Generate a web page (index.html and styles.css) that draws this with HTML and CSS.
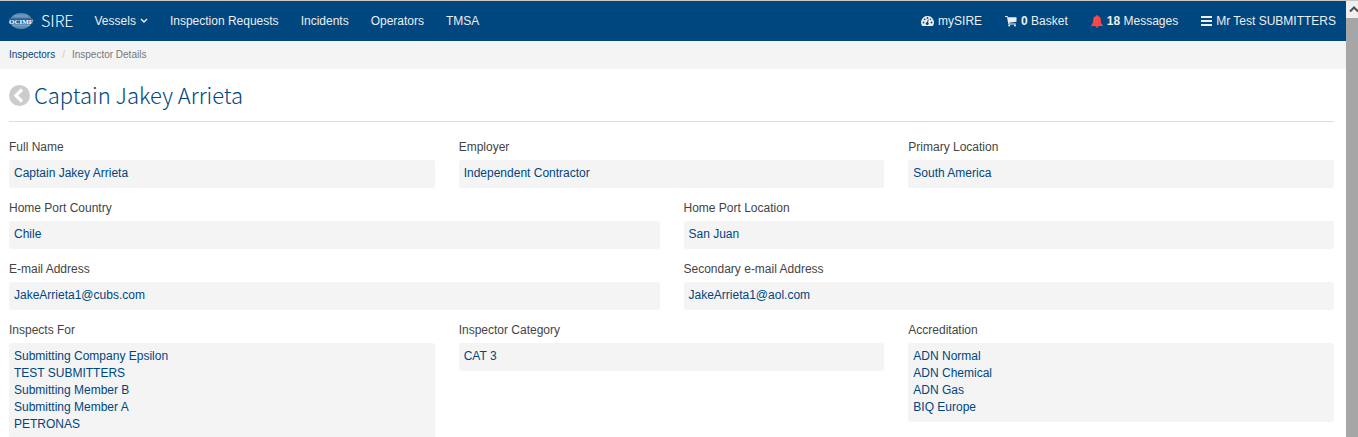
FILE: index.html
```html
<!DOCTYPE html>
<html lang="en">
<head>
    <meta charset="UTF-8" />
    <meta name="viewport" content="width=device-width, initial-scale=1.0" />
    <title>Inspector Details</title>
    <link rel="stylesheet" href="styles.css">
</head>
<body>
    <div class="page">
        <header class="navbar">
            <a class="brand" href="#">
                <svg class="brand-logo" width="26" height="18" viewBox="0 0 26 18" aria-hidden="true">
                    <ellipse cx="13" cy="9" rx="11" ry="8" fill="#5f8db5" />
                    <path d="M6 4h14M4 13.500h18" stroke="#7ba2c3" stroke-width="1" />
                    <path d="M1 6.200h24v5.600H1z" fill="#2a6396" />
                    <text class="logo-text" x="13" y="11.500" text-anchor="middle">OCIMF</text>
                </svg>
                <span class="brand-name">SIRE</span>
            </a>
            <nav class="menu">
                <button type="button" class="menu-item">Vessels
                    <svg width="8" height="6" viewBox="0 0 8 6" aria-hidden="true"><path d="M1 1l3 3 3-3" fill="none" stroke="currentColor" stroke-width="1.500" /></svg>
                </button>
                <a class="menu-item" href="#">Inspection Requests</a>
                <a class="menu-item" href="#">Incidents</a>
                <a class="menu-item" href="#">Operators</a>
                <a class="menu-item" href="#">TMSA</a>
            </nav>
            <nav class="menu menu-right">
                <a class="menu-item" href="#">
                    <svg width="13" height="12" viewBox="0 0 13 12" aria-hidden="true">
                        <path d="M6.500 1A6.400 6.400 0 0 0 1.200 11h10.600A6.400 6.400 0 0 0 6.500 1z" fill="currentColor" />
                        <g fill="#00467f"><circle cx="2.500" cy="7.500" r=".9" /><circle cx="3.700" cy="4.300" r=".9" /><circle cx="6.500" cy="3" r=".9" /><circle cx="10.500" cy="7.500" r=".9" /><circle cx="9.500" cy="4.300" r=".8" /><circle cx="6.200" cy="8.500" r="1.500" /></g>
                        <path d="M6.200 8.500l1.100-4" stroke="#00467f" />
                    </svg>
                    <span>mySIRE</span>
                </a>
                <a class="menu-item" href="#">
                    <svg width="12" height="12" viewBox="0 0 12 12" aria-hidden="true">
                        <path d="M0 1h2.500l.4 1.200H11.500v4.600L4.200 7.700l.1.800h6.500v1H3.400L2 2H0z" fill="currentColor" />
                        <circle cx="4.200" cy="10.500" r="1" fill="currentColor" /><circle cx="10" cy="10.500" r="1" fill="currentColor" />
                    </svg>
                    <span><b>0</b> Basket</span>
                </a>
                <a class="menu-item" href="#">
                    <svg class="bell" width="12" height="13" viewBox="0 0 12 13" aria-hidden="true">
                        <path d="M6 0c.5 0 .9.500.7 1.100C8.800 1.500 9.800 3 9.800 5c0 2.800.8 4 2 5.200v.8H.2v-.8C1.400 9 2.200 7.800 2.200 5c0-2 1-3.500 3.100-3.900C5.100.5 5.500 0 6 0zM4.500 11.300h3C7.500 12.200 6.900 12.800 6 12.800s-1.500-.6-1.500-1.500z" fill="currentColor" />
                    </svg>
                    <span><b>18</b> Messages</span>
                </a>
                <button type="button" class="menu-item">
                    <svg width="11" height="10" viewBox="0 0 11 10" aria-hidden="true"><path d="M0 1h11M0 5h11M0 9h11" stroke="currentColor" stroke-width="2" /></svg>
                    <span>Mr Test SUBMITTERS</span>
                </button>
            </nav>
        </header>

        <nav class="breadcrumb">
            <a href="#">Inspectors</a>
            <span class="divider">/</span>
            <span>Inspector Details</span>
        </nav>

        <main class="content">
            <div class="title">
                <a class="back" href="#" aria-label="Back">
                    <svg width="21" height="21" viewBox="0 0 21 21" aria-hidden="true">
                        <circle cx="10.500" cy="10.500" r="10.500" fill="#ccc" />
                        <path d="M13 4.500l-6 6 6 6" fill="none" stroke="#fff" stroke-width="3.200" />
                    </svg>
                </a>
                <h1>Captain Jakey Arrieta</h1>
            </div>

            <dl class="row thirds">
                <div class="field">
                    <dt>Full Name</dt>
                    <dd>Captain Jakey Arrieta</dd>
                </div>
                <div class="field">
                    <dt>Employer</dt>
                    <dd>Independent Contractor</dd>
                </div>
                <div class="field">
                    <dt>Primary Location</dt>
                    <dd>South America</dd>
                </div>
            </dl>
            <dl class="row halves">
                <div class="field">
                    <dt>Home Port Country</dt>
                    <dd>Chile</dd>
                </div>
                <div class="field">
                    <dt>Home Port Location</dt>
                    <dd>San Juan</dd>
                </div>
                <div class="field">
                    <dt>E-mail Address</dt>
                    <dd>JakeArrieta1@cubs.com</dd>
                </div>
                <div class="field">
                    <dt>Secondary e-mail Address</dt>
                    <dd>JakeArrieta1@aol.com</dd>
                </div>
            </dl>
            <dl class="row thirds">
                <div class="field">
                    <dt>Inspects For</dt>
                    <dd>Submitting Company Epsilon<br />TEST SUBMITTERS<br />Submitting Member B<br />Submitting Member A<br />PETRONAS</dd>
                </div>
                <div class="field">
                    <dt>Inspector Category</dt>
                    <dd>CAT 3</dd>
                </div>
                <div class="field">
                    <dt>Accreditation</dt>
                    <dd>ADN Normal<br />ADN Chemical<br />ADN Gas<br />BIQ Europe</dd>
                </div>
            </dl>
        </main>
    </div>

    <div class="scrollbar" aria-hidden="true">
        <svg width="12" height="17" viewBox="0 0 12 17"><path d="M4 10.500l4-4 4 4" fill="none" stroke="#505050" stroke-width="2" /></svg>
        <div class="thumb"></div>
    </div>
</body>
</html>
```

FILE: styles.css
```css
* {
  box-sizing: border-box;
}

body {
  display: flex;
  height: 100vh;
  margin: 0;
  overflow: hidden;
  border-top: 1px solid #c8c8c8;
  background-color: #fff;
  color: #444;
  font-family: "Liberation Sans", Arial, sans-serif;
  font-size: 12px;
  line-height: 17px;
}

a {
  color: #00467f;
  text-decoration: none;
}

.page {
  flex: 1;
  min-width: 0;
}

.navbar {
  display: flex;
  align-items: center;
  height: 40px;
  padding: 0 10px 0 8px;
  background-color: #00467f;
}

.brand {
  display: flex;
  align-items: center;
  gap: 7px;
  margin-right: 21px;
  color: #fff;
}

.logo-text {
  fill: #fff;
  font-family: "Liberation Serif", serif;
  font-size: 7px;
  font-weight: bold;
}

.brand-name {
  padding-bottom: 2px;
  font-family: "Noto Sans CJK SC", sans-serif;
  font-size: 16px;
  font-weight: 300;
}

.menu {
  display: flex;
  align-items: center;
  gap: 22px;
}

.menu-right {
  gap: 23px;
  margin-left: auto;
}

.menu-item {
  display: flex;
  align-items: center;
  gap: 4px;
  padding: 0;
  border: none;
  background: none;
  color: #eee;
  font: inherit;
  font-size: 12px;
  white-space: nowrap;
  cursor: pointer;
}

.bell {
  color: #ff4545;
}

.breadcrumb {
  display: flex;
  gap: 7px;
  padding: 5px 9px 6px;
  background-color: #f4f4f4;
  color: #777;
  font-size: 10px;
}

.divider {
  color: #ccc;
}

.content {
  padding: 0 12px 0 9px;
}

.title {
  display: flex;
  align-items: center;
  gap: 4px;
  height: 53px;
  margin-bottom: 17px;
  border-bottom: 1px solid #ddd;
}

.back {
  display: flex;
}

h1 {
  margin: 0;
  padding-bottom: 2px;
  color: #00467f;
  font-family: "Noto Sans CJK SC", sans-serif;
  font-size: 22px;
  font-weight: 300;
  line-height: 28px;
}

.row {
  display: grid;
  align-items: start;
  gap: 12px 24px;
  margin: 0 0 12px;
}

.thirds {
  grid-template-columns: repeat(3, 1fr);
}

.halves {
  grid-template-columns: repeat(2, 1fr);
}

dt {
  margin-bottom: 4px;
}

dd {
  margin: 0;
  padding: 5px 5px 6px;
  border-radius: 3px;
  background-color: #f4f4f4;
  color: #00467f;
}

.scrollbar {
  display: flex;
  flex-direction: column;
  width: 12px;
  background-color: #f0f0f0;
}

.thumb {
  flex: 1;
  background-color: #a6a6a6;
}
```
